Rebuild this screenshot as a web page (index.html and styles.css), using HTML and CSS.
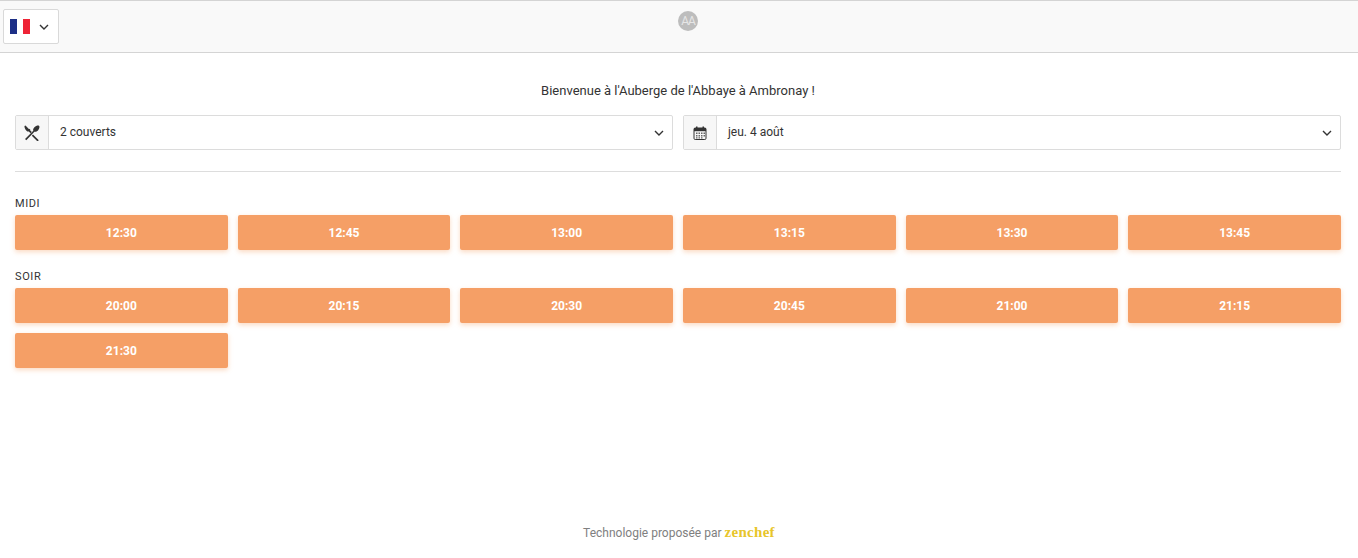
FILE: index.html
```html
<!DOCTYPE html>
<html lang="fr">
<head>
  <meta charset="UTF-8">
  <meta name="viewport" content="width=device-width, initial-scale=1.0">
  <title>Auberge de l'Abbaye</title>
  <link rel="stylesheet" href="styles.css">
</head>
<body>
<div class="page">
  <header class="topbar">
    <button class="lang-button">
      <span class="flag"><i class="flag-blue"></i><i class="flag-white"></i><i class="flag-red"></i></span>
      <svg class="chevron" width="10" height="6" viewBox="0 0 10 6"><path d="M1 1l4 4 4-4" fill="none" stroke="#333" stroke-width="1.4"/></svg>
    </button>
    <div class="avatar">AA</div>
  </header>

  <main class="content">
    <p class="welcome">Bienvenue à l'Auberge de l'Abbaye à Ambronay !</p>

    <div class="selects">
      <div class="select-box">
        <span class="select-icon">
          <svg width="16" height="16" viewBox="0 0 16 16" fill="#333">
            <path d="M15 .8c.9.9.5 3-1 4.600-1.200 1.200-2.600 1.700-3.600 1.300L2.300 15.200 1 14l8.300-8.300c-.4-1-.1-2.300 1.100-3.500C12 .7 14.200 0 15 .8z"/>
            <path d="M1.500 .6l3.600 3.600.5-.5.8.8-.5.5 1.900 1.900-1.300 1.300-1.900-1.900-.5.5c-1.500-.6-2.400-1.500-3-3-.4-1-.7-1.900-.6-2.700z M9 9.600l5.800 5.600-1.300 1.200-5.700-5.600z"/>
          </svg>
        </span>
        <span class="select-value">2 couverts</span>
        <svg class="chevron" width="10" height="6" viewBox="0 0 10 6"><path d="M1 1l4 4 4-4" fill="none" stroke="#333" stroke-width="1.4"/></svg>
      </div>
      <div class="select-box">
        <span class="select-icon">
          <svg width="14" height="14" viewBox="0 0 14 14">
            <rect x="1" y="2" width="12" height="11.500" rx="1.200" fill="none" stroke="#333"/>
            <rect x="1" y="2" width="12" height="3.200" fill="#333"/>
            <rect x="3" y="0.500" width="1.500" height="2.500" fill="#333"/>
            <rect x="9.500" y="0.500" width="1.500" height="2.500" fill="#333"/>
            <path d="M3 6.500h1.500V8H3zM5.500 6.500H7V8H5.500zM8 6.500h1.500V8H8zM10.500 6.500H12V8h-1.500zM3 9h1.500v1.500H3zM5.500 9H7v1.500H5.500zM8 9h1.500v1.500H8zM10.500 9H12v1.500h-1.500zM3 11.200h1.500v1.300H3zM5.500 11.200H7v1.300H5.500zM8 11.200h1.500v1.300H8z" fill="#666"/>
          </svg>
        </span>
        <span class="select-value">jeu. 4 août</span>
        <svg class="chevron" width="10" height="6" viewBox="0 0 10 6"><path d="M1 1l4 4 4-4" fill="none" stroke="#333" stroke-width="1.4"/></svg>
      </div>
    </div>

    <hr class="divider">

    <section class="service">
      <h2 class="service-title">MIDI</h2>
      <div class="slots">
        <button class="slot">12:30</button>
        <button class="slot">12:45</button>
        <button class="slot">13:00</button>
        <button class="slot">13:15</button>
        <button class="slot">13:30</button>
        <button class="slot">13:45</button>
      </div>
    </section>

    <section class="service">
      <h2 class="service-title">SOIR</h2>
      <div class="slots">
        <button class="slot">20:00</button>
        <button class="slot">20:15</button>
        <button class="slot">20:30</button>
        <button class="slot">20:45</button>
        <button class="slot">21:00</button>
        <button class="slot">21:15</button>
        <button class="slot">21:30</button>
      </div>
    </section>
  </main>

  <footer class="footer">Technologie proposée par <span class="brand">zenchef</span></footer>
</div>
</body>
</html>
```

FILE: styles.css
```css
* {
  box-sizing: border-box;
}

html, body {
  margin: 0;
  height: 100%;
  overflow: hidden;
}

body {
  font-family: 'Roboto', 'Liberation Sans', sans-serif;
  font-size: 13px;
  color: #333333;
  background-color: #ffffff;
}

.page {
  display: flex;
  flex-direction: column;
  height: 558px;
}

.topbar {
  position: relative;
  display: flex;
  align-items: flex-start;
  height: 53px;
  padding: 8px 3px 0;
  background-color: #f9f9f9;
  border-top: 1px solid #d4d4d4;
  border-bottom: 1px solid #d4d4d4;
}

.lang-button {
  display: flex;
  align-items: center;
  gap: 9px;
  width: 56px;
  height: 35px;
  padding: 0 0 0 6px;
  background-color: #ffffff;
  border: 1px solid #d9d9d9;
  border-radius: 2px;
}

.flag {
  display: flex;
  width: 20px;
  height: 15px;
}

.flag i {
  flex: 1;
}

.flag-blue {
  background-color: #1d2f86;
}

.flag-white {
  background-color: #ffffff;
}

.flag-red {
  background-color: #ee2436;
}

.avatar {
  position: absolute;
  left: 678px;
  top: 10px;
  width: 20px;
  height: 20px;
  line-height: 20px;
  border-radius: 50%;
  background-color: #bdbdbd;
  color: #e6e6e6;
  font-size: 12px;
  letter-spacing: -1px;
  text-align: center;
}

.content {
  padding: 0 17px 0 15px;
}

.welcome {
  margin: 30px 0 16px;
  line-height: 16px;
  text-align: center;
}

.selects {
  display: grid;
  grid-template-columns: 1fr 1fr;
  gap: 10px;
}

.select-box {
  display: flex;
  align-items: center;
  height: 35px;
  padding-right: 8px;
  border: 1px solid #dcdcdc;
  border-radius: 2px;
}

.select-icon {
  display: flex;
  align-items: center;
  justify-content: center;
  width: 33px;
  height: 100%;
  background-color: #f7f7f7;
  border-right: 1px solid #dcdcdc;
}

.select-value {
  flex-grow: 1;
  padding: 0 0 1px 11px;
  font-size: 12px;
}

.divider {
  height: 1px;
  margin: 21px 0 25px;
  background-color: #dddddd;
  border: none;
}

.service {
  margin-bottom: 20px;
}

.service-title {
  margin: 0 0 5px;
  font-size: 11px;
  font-weight: 400;
  line-height: 13px;
  letter-spacing: 0.6px;
}

.slots {
  display: grid;
  grid-template-columns: repeat(6, 1fr);
  gap: 10px;
}

.slot {
  height: 35px;
  padding: 0;
  background-color: #f59f66;
  color: #ffffff;
  font-family: inherit;
  font-size: 12px;
  font-weight: 700;
  border: none;
  border-radius: 2px;
  box-shadow: 0 2px 5px rgba(245, 159, 102, 0.4);
}

.footer {
  margin-top: auto;
  padding-bottom: 17px;
  line-height: 16px;
  font-size: 12px;
  color: #808080;
  text-align: center;
}

.brand {
  font-family: 'Liberation Serif', serif;
  font-size: 15px;
  font-weight: 700;
  letter-spacing: 0.3px;
  color: #e8c52a;
}
```
